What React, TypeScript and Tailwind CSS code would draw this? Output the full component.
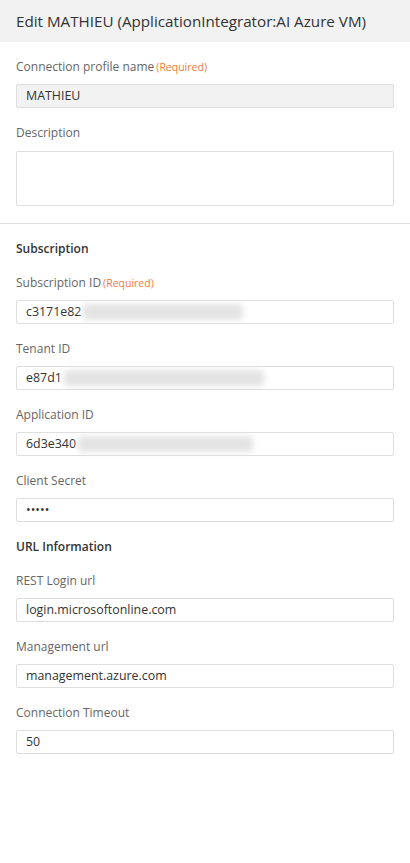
import React from "react";

const font = { fontFamily: '"Open Sans", "Noto Sans", sans-serif' };

function Label({ text, required }: { text: string; required?: boolean }) {
  return (
    <div className="h-[18px] flex items-end text-[12px] leading-[18px] text-[#666]">
      <span>{text}</span>
      {required && <span className="ml-[2px] text-[10.5px] leading-[18px] text-[#f47a3a]">(Required)</span>}
    </div>
  );
}

function Input({ value, blurW, disabled }: { value: string; blurW?: number; disabled?: boolean }) {
  return (
    <div
      className={`mt-2 h-[24px] border border-[#dedede] rounded-[2px] flex items-center px-[9px] text-[12.4px] text-[#333] ${
        disabled ? "bg-[#f2f2f2]" : "bg-white"
      }`}
    >
      <span>{value}</span>
      {blurW ? (
        <span className="ml-[2px] h-[16px] rounded-sm bg-[#e3e3e3] blur-[3px]" style={{ width: blurW }} />
      ) : null}
    </div>
  );
}

function Field({ label, value, required, blurW, disabled }: { label: string; value: string; required?: boolean; blurW?: number; disabled?: boolean }) {
  return (
    <div className="mt-4">
      <Label text={label} required={required} />
      <Input value={value} blurW={blurW} disabled={disabled} />
    </div>
  );
}

export default function App() {
  return (
    <div className="w-[410px] h-[863px] bg-white" style={font}>
      <div className="h-[42px] bg-[#f2f2f2] px-4 flex items-center whitespace-nowrap text-[15.2px] text-[#333]">
        Edit MATHIEU (ApplicationIntegrator:AI Azure VM)
      </div>
      <div className="px-4">
        <Field label="Connection profile name" required value="MATHIEU" disabled />
        <div className="mt-4">
          <Label text="Description" />
          <div className="mt-[9px] h-[55px] border border-[#dedede] rounded-[2px] bg-white" />
        </div>
      </div>
      <div className="mt-[17px] h-px bg-[#dddddd]" />
      <div className="px-4">
        <div className="mt-[16px] h-[18px] text-[12px] leading-[18px] font-semibold text-[#333]">Subscription</div>
        <Field label="Subscription ID" required value="c3171e82" blurW={160} />
        <Field label="Tenant ID" value="e87d1" blurW={200} />
        <Field label="Application ID" value="6d3e340" blurW={175} />
        <Field label="Client Secret" value="•••••" />
        <div className="mt-4 h-[18px] text-[12px] leading-[18px] font-semibold text-[#333]">URL Information</div>
        <Field label="REST Login url" value="login.microsoftonline.com" />
        <Field label="Management url" value="management.azure.com" />
        <Field label="Connection Timeout" value="50" />
      </div>
    </div>
  );
}
